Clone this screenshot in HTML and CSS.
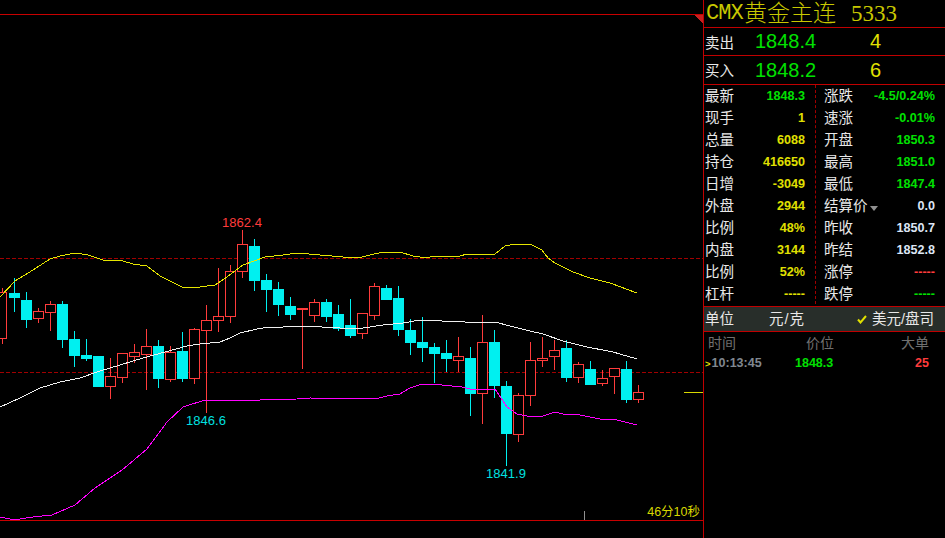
FILE: index.html
```html
<!DOCTYPE html>
<html lang="zh-CN">

<head>
  <meta charset="UTF-8">
  <title>CMX黄金主连</title>
  <link rel="stylesheet" href="styles.css">
</head>

<body>
  <div class="screen">
    <svg class="chart" width="703" height="538" viewBox="0 0 703 538">
      <path class="frame" d="M0 14.5H703M0 520.5H703" />
      <path class="triangle" d="M694 15H703V24Z" />
      <path class="grid-dash" d="M0 258.5H703M0 372.5H703" />

      <!-- wicks -->
      <path class="wick-red"
        d="M2.5 288V344M38.5 308V323M50.5 301V331M110.5 358V399M122.5 378V383M134.5 344V363M146.5 329V390M170.5 346V382M194.5 328V384M206.5 305V413M218.5 268V332M230.5 265V323M242.5 230V278M302.5 310V369M314.5 299V322M362.5 334V339M374.5 283V320M458.5 337V372M482.5 315V424M518.5 393V442M530.5 342V406M542.5 337V367M554.5 340V370M578.5 362V383M602.5 370V386M614.5 377V394M638.5 385V403" />
      <path class="wick-cyan"
        d="M14.5 278V312M26.5 292V328M62.5 301V348M74.5 331V367M86.5 339V361M158.5 340V388M182.5 332V382M254.5 239V291M266.5 274V312M278.5 282V316M290.5 297V320M326.5 299V322M338.5 305V331M350.5 299V338M386.5 285V300M398.5 286V336M410.5 319V355M422.5 317V362M434.5 343V383M446.5 340V372M470.5 347V416M494.5 330V398M506.5 381V466M566.5 340V382M590.5 361V385M626.5 361V403" />

      <!-- cyan bodies -->
      <g class="body-cyan">
        <rect x="9" y="293" width="11" height="5" />
        <rect x="21" y="300" width="11" height="20" />
        <rect x="57" y="304" width="11" height="36" />
        <rect x="69" y="339" width="11" height="17" />
        <rect x="81" y="355" width="11" height="4" />
        <rect x="93" y="356" width="11" height="31" />
        <rect x="153" y="346" width="11" height="33" />
        <rect x="177" y="351" width="11" height="28" />
        <rect x="249" y="246" width="11" height="35" />
        <rect x="261" y="280" width="11" height="10" />
        <rect x="273" y="289" width="11" height="16" />
        <rect x="285" y="306" width="11" height="9" />
        <rect x="321" y="302" width="11" height="15" />
        <rect x="333" y="314" width="11" height="15" />
        <rect x="345" y="325" width="11" height="11" />
        <rect x="381" y="288" width="11" height="12" />
        <rect x="393" y="298" width="11" height="32" />
        <rect x="405" y="330" width="11" height="13" />
        <rect x="417" y="342" width="11" height="6" />
        <rect x="429" y="347" width="11" height="7" />
        <rect x="441" y="353" width="11" height="6" />
        <rect x="465" y="358" width="11" height="36" />
        <rect x="489" y="342" width="11" height="44" />
        <rect x="501" y="386" width="11" height="48" />
        <rect x="561" y="348" width="11" height="30" />
        <rect x="585" y="369" width="11" height="16" />
        <rect x="621" y="369" width="11" height="31" />
      </g>

      <!-- red bodies, hollow -->
      <g class="body-red">
        <rect x="-3.5" y="292.5" width="10" height="46" />
        <rect x="33.5" y="311.5" width="10" height="7" />
        <rect x="45.5" y="304.5" width="10" height="8" />
        <rect x="105.5" y="376.5" width="10" height="10" />
        <rect x="117.5" y="353.5" width="10" height="24" />
        <rect x="129.5" y="352.5" width="10" height="4" />
        <rect x="141.5" y="346.5" width="10" height="8" />
        <rect x="165.5" y="352.5" width="10" height="27" />
        <rect x="189.5" y="329.5" width="10" height="49" />
        <rect x="201.5" y="320.5" width="10" height="10" />
        <rect x="213.5" y="316.5" width="10" height="4" />
        <rect x="225.5" y="271.5" width="10" height="45" />
        <rect x="237.5" y="244.5" width="10" height="27" />
        <rect x="297.5" y="308.5" width="10" height="1" />
        <rect x="309.5" y="302.5" width="10" height="13" />
        <rect x="357.5" y="313.5" width="10" height="20" />
        <rect x="369.5" y="286.5" width="10" height="29" />
        <rect x="453.5" y="356.5" width="10" height="4" />
        <rect x="477.5" y="342.5" width="10" height="51" />
        <rect x="513.5" y="395.5" width="10" height="39" />
        <rect x="525.5" y="360.5" width="10" height="35" />
        <rect x="537.5" y="358.5" width="10" height="2" />
        <rect x="549.5" y="350.5" width="10" height="6" />
        <rect x="573.5" y="364.5" width="10" height="13" />
        <rect x="597.5" y="378.5" width="10" height="5" />
        <rect x="609.5" y="368.5" width="10" height="8" />
        <rect x="633.5" y="392.5" width="10" height="7" />
      </g>

      <!-- bands -->
      <polyline class="line-yellow"
        points="0,297 15,281 33,270 50,259 60,256 75,253 88,255 103,260 123,261 133,264 147,266 160,276 182,287 200,287 215,285 227,277 243,265 265,257 283,255 297,253 320,255 343,257 358,258 370,255 383,252 400,252 413,256 420,257 430,257 440,256 460,256 467,254 477,255 495,254 505,246 515,244 525,244 532,245 542,250 548,258 555,263 573,272 590,278 610,283 637,293" />
      <polyline class="line-white"
        points="0,407 20,398 40,388 60,382 80,378 100,371 120,365 143,358 165,352 187,346 200,344 220,342 230,338 240,333 257,329 263,328 283,327 297,326 320,326 322,327 357,329 370,327 383,325 403,323 420,320 442,321 465,322 495,322 510,326 530,331 543,334 563,341 587,347 613,352 637,359" />
      <polyline class="line-magenta"
        points="0,517 10,519 20,519 33,517 52,515 75,505 95,488 122,470 147,449 167,422 183,407 205,400 240,400 260,400 297,399 310,398 375,399 387,396 400,394 410,388 422,384 442,385 462,387 470,389 495,389 507,407 517,414 527,416 543,416 555,412 563,414 580,415 600,419 617,420 637,425" />

      <path class="stub" d="M684 392.5H703" />
      <path class="tick" d="M584.5 511V520" />

      <text class="label label-high" x="242" y="227">1862.4</text>
      <text class="label label-low" x="206" y="425">1846.6</text>
      <text class="label label-low" x="506" y="478">1841.9</text>
      <text class="countdown" x="700" y="516">46分10秒</text>
    </svg>

    <div class="panel">
      <div class="title-row">
        <span class="title-code">CMX</span><span class="title-name">黄金主连</span><span class="title-num">5333</span>
      </div>

      <div class="quote-row">
        <span class="cell-label">卖出</span>
        <span class="quote-price">1848.4</span>
        <span class="quote-size">4</span>
      </div>
      <div class="quote-row">
        <span class="cell-label">买入</span>
        <span class="quote-price">1848.2</span>
        <span class="quote-size">6</span>
      </div>

      <div class="stats">
        <div class="stat"><span class="cell-label">最新</span><b class="green">1848.3</b></div>
        <div class="stat"><span class="cell-label">涨跌</span><b class="green">-4.5/0.24%</b></div>
        <div class="stat"><span class="cell-label">现手</span><b class="yellow">1</b></div>
        <div class="stat"><span class="cell-label">速涨</span><b class="green">-0.01%</b></div>
        <div class="stat"><span class="cell-label">总量</span><b class="yellow">6088</b></div>
        <div class="stat"><span class="cell-label">开盘</span><b class="green">1850.3</b></div>
        <div class="stat"><span class="cell-label">持仓</span><b class="yellow">416650</b></div>
        <div class="stat"><span class="cell-label">最高</span><b class="green">1851.0</b></div>
        <div class="stat"><span class="cell-label">日增</span><b class="yellow">-3049</b></div>
        <div class="stat"><span class="cell-label">最低</span><b class="green">1847.4</b></div>
        <div class="stat"><span class="cell-label">外盘</span><b class="yellow">2944</b></div>
        <div class="stat"><span class="cell-label">结算价<i class="caret"></i></span><b class="pale">0.0</b></div>
        <div class="stat"><span class="cell-label">比例</span><b class="yellow">48%</b></div>
        <div class="stat"><span class="cell-label">昨收</span><b class="pale">1850.7</b></div>
        <div class="stat"><span class="cell-label">内盘</span><b class="yellow">3144</b></div>
        <div class="stat"><span class="cell-label">昨结</span><b class="pale">1852.8</b></div>
        <div class="stat"><span class="cell-label">比例</span><b class="yellow">52%</b></div>
        <div class="stat"><span class="cell-label">涨停</span><b class="red">-----</b></div>
        <div class="stat"><span class="cell-label">杠杆</span><b class="yellow">-----</b></div>
        <div class="stat"><span class="cell-label">跌停</span><b class="green">-----</b></div>
      </div>

      <div class="unit-row">
        <span class="cell-label">单位</span>
        <span class="unit-option unit-cny">元/克</span>
        <svg class="check" width="10" height="10" viewBox="0 0 10 10">
          <path d="M1 5.5L3.5 8.5L9 2" />
        </svg>
        <span class="unit-option">美元/盘司</span>
      </div>

      <div class="tape-head">
        <span>时间</span>
        <span>价位</span>
        <span>大单</span>
      </div>
      <div class="tape-row">
        <span class="tape-time"><i class="tape-mark">&gt;</i>10:13:45</span>
        <b class="green tape-price">1848.3</b>
        <b class="red tape-size">25</b>
      </div>
    </div>
  </div>
</body>

</html>
```

FILE: styles.css
```css
html,
body {
  margin: 0;
  background-color: black;
}

.screen {
  display: flex;
  width: 945px;
  height: 538px;
  overflow: hidden;
  font-family: "Liberation Sans", "Noto Sans CJK SC", sans-serif;
}

/* chart */
.chart {
  flex: 0 0 703px;
  display: block;
  shape-rendering: crispEdges;
}

.frame {
  stroke: #c80000;
  fill: none;
}

.triangle {
  fill: #c82020;
}

.grid-dash {
  stroke: #a00000;
  stroke-dasharray: 4 2;
  fill: none;
}

.wick-red {
  stroke: #ff3c3c;
  fill: none;
}

.wick-cyan {
  stroke: #00f0f0;
  fill: none;
}

.body-cyan {
  fill: #00f0f0;
}

.body-red {
  fill: black;
  stroke: #ff3c3c;
}

.line-yellow,
.line-white,
.line-magenta {
  fill: none;
}

.line-yellow {
  stroke: #e6e600;
}

.line-white {
  stroke: #f0f0f0;
}

.line-magenta {
  stroke: #ff00ff;
}

.stub {
  stroke: #d8d800;
}

.tick {
  stroke: #909090;
}

.label {
  font-size: 13px;
  text-anchor: middle;
}

.label-high {
  fill: #ff3c3c;
}

.label-low {
  fill: #00e0e0;
}

.countdown {
  font-size: 12.5px;
  fill: #d8d800;
  text-anchor: end;
}

/* right panel */
.panel {
  flex: 1;
  display: flex;
  flex-direction: column;
  border-left: 1px solid #c00000;
  color: #e8e8e8;
}

.title-row {
  height: 27px;
  display: flex;
  align-items: center;
  padding-left: 2px;
  border-bottom: 1px solid #c00000;
  color: #c8c800;
  line-height: 24px;
}

.title-code {
  font-family: "Liberation Mono", monospace;
  font-size: 22px;
  letter-spacing: -0.9px;
}

.title-num {
  font-family: "Liberation Serif", serif;
  font-size: 23px;
  margin-left: 15px;
}

.title-name {
  font-family: "Noto Sans CJK SC", sans-serif;
  font-size: 23px;
  font-weight: 300;
  margin-left: 1px;
  position: relative;
  top: -3px;
}

.quote-row {
  height: 27px;
  display: flex;
  align-items: center;
  padding-left: 1px;
  border-bottom: 1px solid #c00000;
}

.quote-row+.quote-row {
  height: 28px;
}

.quote-row .cell-label {
  padding-top: 2px;
}

.cell-label {
  font-size: 14.5px;
  line-height: 18px;
  color: #e8e8e8;
  white-space: nowrap;
}

.quote-price {
  margin-left: 21px;
  width: 115px;
  font-size: 20px;
  color: #00e000;
}

.quote-size {
  font-size: 20px;
  color: #e0e000;
}

.stats {
  position: relative;
  display: grid;
  grid-template-columns: 111px 1fr;
  grid-auto-rows: 22px;
  height: 221px;
  border-bottom: 1px solid #c00000;
}

/* divider between the two stat columns */
.stats::after {
  content: "";
  position: absolute;
  left: 111px;
  top: 0;
  height: 219px;
  border-left: 1px dashed #a00000;
}

.stat {
  display: flex;
  align-items: center;
  justify-content: space-between;
  padding-left: 1px;
}

.stat b {
  font-size: 12.6px;
}

.stat:nth-child(odd) {
  padding-right: 10px;
}

.stat:nth-child(even) {
  padding-left: 9px;
  padding-right: 10px;
}

.green {
  color: #00e000;
}

.yellow {
  color: #e0e000;
}

.pale {
  color: #dde6f5;
}

.red {
  color: #ff3c3c;
}

.caret {
  display: inline-block;
  margin-left: 2px;
  border-left: 4px solid transparent;
  border-right: 4px solid transparent;
  border-top: 5px solid #909090;
}

.unit-row {
  height: 24px;
  display: flex;
  align-items: center;
  padding-left: 1px;
  background-color: #282e2a;
  border-bottom: 1px solid #c00000;
}

.unit-option {
  font-size: 14.5px;
  line-height: 18px;
  color: #e8e8e8;
  white-space: nowrap;
}

.unit-cny {
  margin-left: 35px;
  width: 88px;
  letter-spacing: 1px;
}

.check {
  flex: none;
  margin-right: 5px;
}

.check path {
  fill: none;
  stroke: #e0e000;
  stroke-width: 2;
}

.tape-head {
  height: 22px;
  display: flex;
  align-items: center;
  padding-left: 4px;
  padding-bottom: 2px;
  box-sizing: border-box;
  font-size: 14px;
  color: #707070;
}

.tape-head span:nth-child(2) {
  margin-left: 70px;
}

.tape-head span:nth-child(3) {
  margin-left: 67px;
}

.tape-row {
  height: 18px;
  display: flex;
  align-items: center;
  padding-left: 1px;
  font-size: 12.5px;
}

.tape-time {
  width: 90px;
  font-weight: bold;
  color: #808890;
  white-space: nowrap;
}

.tape-mark {
  font-size: 9.5px;
  margin-right: 1px;
  font-style: normal;
  color: #e0e000;
}

.tape-price {
  width: 120px;
}
```
